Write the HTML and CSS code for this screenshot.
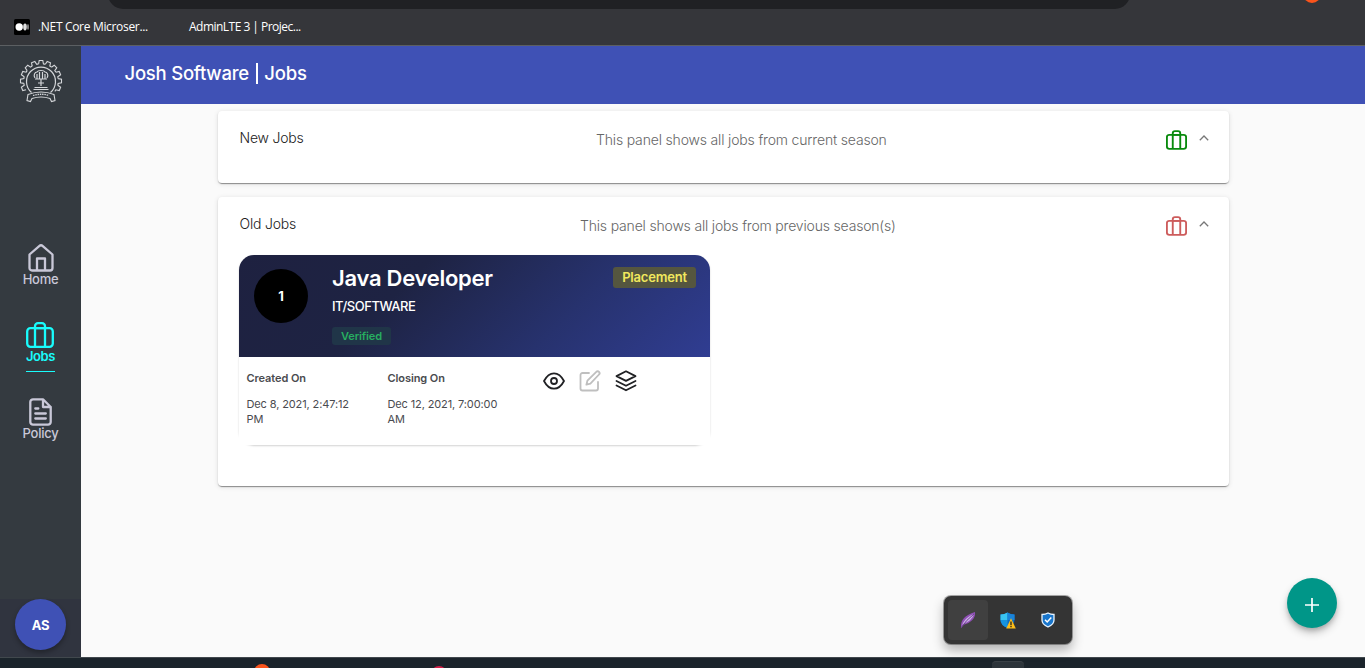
FILE: index.html
```
<!DOCTYPE html>
<html lang="en">
<head>
<meta charset="utf-8">
<title>Josh Software | Jobs</title>
<link rel="stylesheet" href="styles.css">
</head>
<body>
<svg class="defs" width="0" height="0">
  <defs>
    <symbol id="case" viewBox="0 0 28 26">
      <rect x="1.2" y="6.2" width="25.6" height="18.6" rx="3.2"/>
      <path d="M9 24.8V4.2a3 3 0 0 1 3-3h4a3 3 0 0 1 3 3v20.6M9 6.200h10"/>
    </symbol>
  </defs>
</svg>
<div class="browser">
  <div class="omnibox"></div>
  <div class="ext-dot"></div>
  <div class="bookmarks">
    <svg class="favicon" viewBox="0 0 16 16"><rect width="16" height="16" rx="1.5" fill="#000"/><circle cx="5.2" cy="8" r="3.7" fill="#fff"/><ellipse cx="11" cy="8" rx="1.8" ry="3.4" fill="#ddd"/><ellipse cx="14" cy="8" rx=".7" ry="3" fill="#bbb"/></svg>
    <span class="bookmark first">.NET Core Microser...</span>
    <span class="bookmark second">AdminLTE 3 | Projec...</span>
  </div>
</div>
<div class="app">
  <nav class="sidebar">
    <svg class="crest" viewBox="-22 -22 44 44" fill="none" stroke="#d4d6d9" stroke-width="1.1">
      <g>
        <path id="tooth" d="M-2.41-17.13-1.8-20.500H1.8l.61 3.370A17.3 17.3 0 0 1 4.33-16.75"/>
        <use href="#tooth" transform="rotate(22.5)"/><use href="#tooth" transform="rotate(45)"/>
        <use href="#tooth" transform="rotate(67.5)"/><use href="#tooth" transform="rotate(90)"/>
        <use href="#tooth" transform="rotate(112.5)"/>
        <use href="#tooth" transform="rotate(-22.5)"/><use href="#tooth" transform="rotate(-45)"/>
        <use href="#tooth" transform="rotate(-67.5)"/><use href="#tooth" transform="rotate(-90)"/>
        <use href="#tooth" transform="rotate(-112.5)"/>
      </g>
      <path d="M-9.5 11.5a14.500 14.500 0 1 1 19 0" stroke-width="1.200"/>
      <path d="M-6-3c-2-3 0-6 2-6 1-2 7-2 8 0 2 0 4 3 2 6M-4-2v-5M-1.500-2v-7M1.500-2v-7M4-2v-5M-6-2H6M0-2v7M-3 2H3M-6.500 6.500h13M-7.500 8.500h15" stroke-width="1.200"/>
      <path d="M-13 13.500Q0 8.500 13 13.500L14 19.500 10.500 20.500 9 17.500Q0 14.500-9 17.500L-10.500 20.500-14 19.500Z" fill="#343a40"/>
      <path d="M-8 14.500Q0 12 8 14.500" stroke-width="1.300" stroke-dasharray="1.500 .8"/>
    </svg>
    <div class="nav-item home">
      <svg width="26" height="28" viewBox="0 0 26 28"><path d="M1.500 10.500 11.200 2.100a2.700 2.700 0 0 1 3.600 0l9.700 8.400V24a2.500 2.500 0 0 1-2.500 2.500H4A2.500 2.500 0 0 1 1.500 24ZM9 26.500v-12h8v12"/></svg>
      <span>Home</span>
    </div>
    <div class="nav-item jobs">
      <svg width="28" height="26"><use href="#case"/></svg>
      <span>Jobs</span>
    </div>
    <div class="nav-item policy">
      <svg width="23" height="28" viewBox="0 0 23 28"><path d="M14 1.300H4A2.700 2.700 0 0 0 1.300 4v20A2.700 2.700 0 0 0 4 26.700h15a2.700 2.700 0 0 0 2.700-2.700V9ZM14 1.300V9h7.700M6.300 10.500h3M6.300 15.500h10.500M6.300 20.500h10.500"/></svg>
      <span>Policy</span>
    </div>
    <div class="user"><div class="avatar">AS</div></div>
  </nav>
  <div class="content">
    <header class="topbar">Josh Software <i></i> Jobs</header>
    <main>
      <section class="panel new">
        <div class="panel-head">
          <span class="title">New Jobs</span>
          <span class="desc current">This panel shows all jobs from current season</span>
          <svg class="bag green" width="21" height="20"><use href="#case"/></svg>
          <svg class="chev" width="10" height="6" viewBox="0 0 10 6"><path d="M.8 5.200 5 1l4.200 4.200"/></svg>
        </div>
      </section>
      <section class="panel old">
        <div class="panel-head">
          <span class="title">Old Jobs</span>
          <span class="desc previous">This panel shows all jobs from previous season(s)</span>
          <svg class="bag red" width="21" height="20"><use href="#case"/></svg>
          <svg class="chev" width="10" height="6" viewBox="0 0 10 6"><path d="M.8 5.200 5 1l4.200 4.200"/></svg>
        </div>
        <article class="job">
          <div class="job-head">
            <div class="num">1</div>
            <div class="job-info">
              <h2>Java Developer</h2>
              <p>IT/SOFTWARE</p>
              <span class="verified">Verified</span>
            </div>
            <span class="placement">Placement</span>
          </div>
          <div class="job-body">
            <div class="date created"><b>Created On</b><span>Dec 8, 2021, 2:47:12<br>PM</span></div>
            <div class="date closing"><b>Closing On</b><span>Dec 12, 2021, 7:00:00<br>AM</span></div>
            <div class="actions">
              <svg width="22" height="22" viewBox="0 0 22 22"><path d="M1 11C3.600 6 7 3.300 11 3.300S18.400 6 21 11c-2.600 5-6 7.700-10 7.700S3.600 16 1 11Z"/><circle cx="11" cy="11" r="3"/></svg>
              <svg class="off" width="22" height="22" viewBox="0 0 22 22"><path d="M10 3H3.500A2 2 0 0 0 1.500 5v13.500a2 2 0 0 0 2 2H17a2 2 0 0 0 2-2V12M17.300 1.800a1.900 1.900 0 0 1 2.700 2.700l-8.600 9.200-4 1 1-4Z"/></svg>
              <svg width="22" height="22" viewBox="0 0 22 22"><path d="M11 1.300 1.500 6.100 11 10.900l9.500-4.800ZM1.500 11l9.500 4.800 9.500-4.800M1.500 15.500l9.500 4.800 9.500-4.800"/></svg>
            </div>
          </div>
        </article>
      </section>
    </main>
  </div>
</div>
<div class="taskbar"><div class="task-dot orange"></div><div class="task-dot crimson"></div><div class="task-tile"></div></div>
<div class="tray">
  <div class="tray-cell active"><svg width="16" height="18" viewBox="0 0 16 18"><path d="M1 16.500C.5 9 5 4 15 1c1 6-4 11-12 13Z" fill="#8f4fb5"/><path d="M1 17 3 12C6 7 9 5 14 3c-2 5-5 8-11 10Z" fill="#ccb1e6"/><path d="M1 17Q6 9 14 3" fill="none" stroke="#6e4392"/></svg></div>
  <div class="tray-cell"><svg width="16" height="17" viewBox="0 0 16 17"><path d="M7.500.5Q10.500 2.500 14.500 2.500V8q0 5-7 8-7-3-7-8V2.500q4 0 7-2" fill="#0c6cc4"/><path d="M7.500.5V8h-7V2.500q4 0 7-2" fill="#39c4f1"/><path d="M7.500 8H.5q0 5 7 8Z" fill="#1793df"/><path d="M7.500.5q3 2 7 2V8h-7Z" fill="#1a83d8"/><path d="M11 6.200 15.800 16.500H6.200Z" fill="#fdbd19"/><path d="M11 9.500v3.700M11 14v1.300" stroke="#222" stroke-width="1.300"/></svg></div>
  <div class="tray-cell"><svg width="14" height="16" viewBox="0 0 14 16"><path d="M7 1Q9.500 2.500 13 2.500V8q0 4.500-6 7-6-2.500-6-7V2.500Q4.500 2.500 7 1Z" fill="#1976cc" stroke="#e8f4ff" stroke-width="1.300"/><path d="m4 7.800 2.200 2.200L10.300 5.500" fill="none" stroke="#fff" stroke-width="1.500"/></svg></div>
</div>
<div class="fab"><svg width="16" height="16" viewBox="0 0 16 16"><path d="M8 1v14M1 8h14" stroke="#fff" stroke-width="1.700"/></svg></div>
</body>
</html>
```
FILE: styles.css
```
* { box-sizing: border-box; }
body { margin: 0; width: 1365px; height: 668px; overflow: hidden; display: flex; flex-direction: column; position: relative; font-family: Inter, sans-serif; background: #fafafa; }
svg { display: block; flex: none; overflow: visible; }
svg.defs { position: absolute; }

.browser { height: 46px; flex: none; position: relative; overflow: hidden; background: #35363a; border-bottom: 1px solid #5c5f62; padding-top: 19px; }
.omnibox { position: absolute; left: 108px; top: -21px; width: 1022px; height: 30px; border-radius: 15px; background: #202124; }
.ext-dot { position: absolute; left: 1303px; top: -15px; width: 18px; height: 18px; border-radius: 50%; background: #fa541c; }
.bookmarks { display: flex; align-items: center; height: 16px; padding-left: 14px; color: #fff; font: 12px/16px "Open Sans", sans-serif; white-space: nowrap; }
.favicon { width: 16px; height: 16px; margin-right: 8px; }
.bookmark { letter-spacing: -.32px; }
.bookmark.first { width: 151px; }
.bookmark.second { letter-spacing: -.52px; }

.app { height: 611px; flex: none; display: flex; }
.sidebar { width: 81px; flex: none; display: flex; flex-direction: column; align-items: center; background: #343a40; padding-top: 13px; }
.crest { width: 44px; height: 44px; }
.nav-item { display: flex; flex-direction: column; align-items: center; color: #c9c8d8; font-size: 13px; line-height: 16px; font-weight: 500; letter-spacing: -.25px; }
.nav-item svg { fill: none; stroke: currentColor; stroke-width: 2.3; stroke-linejoin: round; stroke-linecap: round; }
.home { margin-top: 141px; }
.home span { margin-top: -1px; margin-bottom: 1px; }
.jobs { margin-top: 34px; color: #19fcfc; font-weight: 600; border-bottom: 1px solid #19fcfc; padding-bottom: 7px; letter-spacing: -.4px; }
.policy { margin-top: 26px; }
.policy span { margin-top: -1px; }
.user { margin-top: auto; width: 81px; height: 58px; display: flex; justify-content: center; background: #30343f; }
.avatar { width: 51px; height: 51px; border-radius: 50%; display: grid; place-items: center; background: #3f51b5; color: #fff; font-size: 13px; font-weight: 700; letter-spacing: -.3px; box-shadow: 0 3px 5px rgba(0,0,0,.3); }

.content { flex: 1; }
.topbar { height: 58px; display: flex; align-items: center; padding: 0 0 4px 43.5px; background: #3f51b5; color: #fff; font-size: 18.5px; font-weight: 500; line-height: 24px; letter-spacing: -.23px; white-space: pre; }
.topbar i { width: 2px; height: 21px; margin: 0 2px; background: #fff; }
main { padding: 7px 136px 0 137px; display: flex; flex-direction: column; gap: 14px; }
.panel { background: #fff; border-radius: 4px; padding: 0 21px; box-shadow: 0 3px 1px -2px rgba(0,0,0,.2), 0 1px 1px rgba(0,0,0,.25), 0 1px 5px rgba(0,0,0,.12); }
.panel.new { height: 72px; }
.panel.old { height: 289px; }
.panel-head { height: 58px; display: flex; align-items: center; font-size: 14px; font-weight: 300; line-height: 20px; white-space: nowrap; }
.title { width: 125px; color: #212121; margin-top: -4px; padding-left: .5px; letter-spacing: -.2px; }
.desc { color: #666; letter-spacing: -.17px; }
.current { margin-left: 232px; }
.previous { margin-left: 216px; letter-spacing: -.18px; }
.bag { margin-left: auto; fill: none; stroke-width: 2.5; stroke-linejoin: round; }
.green { stroke: #088a0c; }
.red { stroke: #cd5c5c; }
.chev { margin: -5px -1px 0 12px; fill: none; stroke: #777; stroke-width: 1.3; }

.job { width: 471px; height: 190px; border-radius: 15px; box-shadow: 0 1px 2px rgba(0,0,0,.18); }
.job-head { height: 102px; display: flex; border-radius: 15px 15px 0 0; background: linear-gradient(135deg, #1e2140 0%, #1e2343 34%, #27326e 68%, #303d92 100%); padding: 12px 14px 0 15px; color: #fff; }
.num { width: 54px; height: 54px; margin-top: 2px; border-radius: 50%; background: #000; display: grid; place-items: center; font-size: 13px; font-weight: 700; }
.job-info { margin-left: 24px; display: flex; flex-direction: column; align-items: flex-start; flex: 1; }
.job-info h2 { margin: -1px 0 1px; font-size: 22px; line-height: 24px; font-weight: 600; letter-spacing: -.28px; }
.job-info p { margin: 7px 0 0; font-size: 13px; line-height: 16px; font-weight: 500; letter-spacing: -.45px; }
.verified { margin-top: 13px; width: 59px; height: 18px; border-radius: 3px; background: #203548; color: #27ae60; font-size: 11px; line-height: 18px; font-weight: 600; letter-spacing: -.1px; text-align: center; }
.placement { width: 83px; height: 21px; border-radius: 3px; background: #55563f; color: #f1e85d; font-size: 13px; line-height: 21px; font-weight: 600; letter-spacing: -.2px; text-align: center; }
.job-body { height: 88px; display: flex; padding: 13px 8px 0 7.5px; background: #fff; }
.date { width: 141px; display: flex; flex-direction: column; gap: 11px; font-size: 11px; line-height: 15px; color: #4a4b4f; letter-spacing: -.12px; white-space: nowrap; }
.date b { font-weight: 600; line-height: 16px; letter-spacing: -.08px; }
.actions { display: flex; gap: 14px; margin-left: 14px; }
.actions svg { fill: none; stroke: #202124; stroke-width: 1.8; stroke-linejoin: round; stroke-linecap: round; }
.actions .off { stroke: #bfbfbf; }

.taskbar { height: 11px; flex: none; background: #1b242b; border-top: 1px solid #41484d; position: relative; overflow: hidden; }
.task-dot { position: absolute; border-radius: 50%; width: 16px; height: 16px; }
.orange { left: 254px; top: 6px; background: #fa541c; }
.crimson { left: 431px; top: 8px; background: #d32048; }
.task-tile { position: absolute; left: 992px; top: 3px; width: 32px; height: 20px; border-radius: 4px; background: #2c343a; border-top: 1px solid #3b4247; }

.tray { position: absolute; left: 944px; top: 596px; width: 128px; height: 48px; display: flex; padding: 4px; border-radius: 7px; background: #343434; box-shadow: 0 0 0 1px rgba(0,0,0,.32), 0 6px 12px rgba(0,0,0,.3); }
.tray-cell { width: 40px; height: 40px; display: grid; place-items: center; border-radius: 4px; }
.tray-cell.active { background: #404040; }
.fab { position: absolute; left: 1287px; top: 578px; width: 50px; height: 50px; border-radius: 50%; display: grid; place-items: center; padding-top: 3px; background: #009688; box-shadow: 0 3px 5px -1px rgba(0,0,0,.2), 0 5px 8px rgba(0,0,0,.2); }
```
